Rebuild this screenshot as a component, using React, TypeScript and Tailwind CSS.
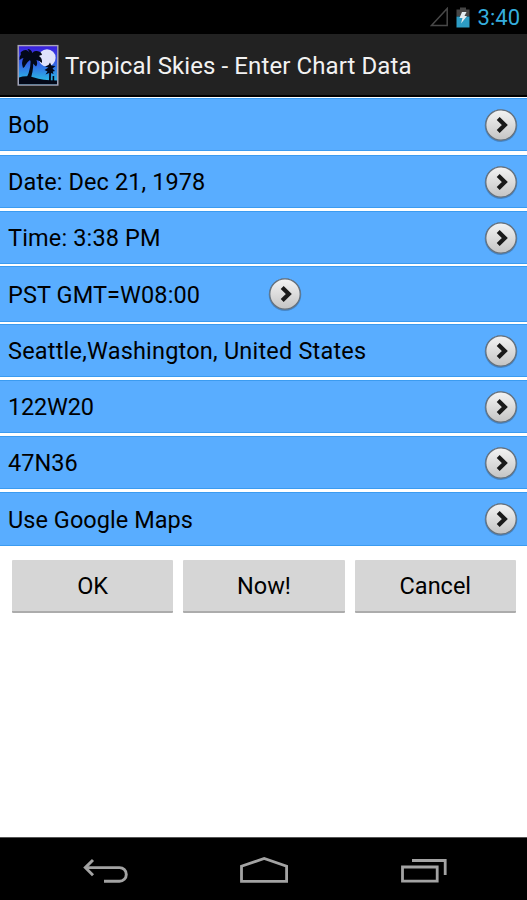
import { clsx } from "clsx";

type ChartField = {
  text: string;
  // Row height, gap above it and text spacing
  box: string;
  spacing: string;
  narrow?: boolean;
};

const FIELDS: ChartField[] = [
  { text: "Bob", box: "mt-px h-[53px]", spacing: "tracking-[0px]" },
  { text: "Date: Dec 21, 1978", box: "mt-1 h-[53px]", spacing: "tracking-[0.1px]" },
  { text: "Time: 3:38 PM", box: "mt-[3px] h-[53px]", spacing: "tracking-[0.15px]" },
  { text: "PST GMT=W08:00", box: "mt-0.5 h-14", spacing: "tracking-[0.1px]", narrow: true },
  { text: "Seattle,Washington, United States", box: "mt-0.5 h-[53px]", spacing: "tracking-[0.2px]" },
  { text: "122W20", box: "mt-[3px] h-[53px]", spacing: "tracking-[-0.2px]" },
  { text: "47N36", box: "mt-[3px] h-[53px]", spacing: "tracking-[0px]" },
  { text: "Use Google Maps", box: "mt-[3px] h-[54px]", spacing: "tracking-[0.05px]" },
];

const BUTTONS = ["OK", "Now!", "Cancel"];

function ArrowBadge() {
  return (
    <svg className="size-9 shrink-0" viewBox="0 0 36 36" fill="none">
      <defs>
        <linearGradient id="badge" x1="0" y1="0" x2="0" y2="1">
          <stop offset="0" stopColor="#f4f4f4" />
          <stop offset="1" stopColor="#c4c4c4" />
        </linearGradient>
      </defs>
      <circle cx="18" cy="18.6" r="16.3" fill="#2f5f92" opacity="0.5" />
      <circle cx="18" cy="18" r="15.2" fill="url(#badge)" stroke="#66717c" strokeWidth="1.2" />
      <path d="M15.2 11.6 L21.8 18 L15.2 24.4" stroke="#1a1a1a" strokeWidth="4.2" />
    </svg>
  );
}

function AppIcon() {
  return (
    <svg className="size-[42px]" viewBox="0 0 42 42">
      <defs>
        <linearGradient id="sky" x1="0" y1="0" x2="0" y2="1">
          <stop offset="0" stopColor="#3a1cdc" />
          <stop offset="0.4" stopColor="#3458e6" />
          <stop offset="0.85" stopColor="#2cb0e4" />
        </linearGradient>
      </defs>
      <rect x="1.2" y="1.6" width="39.6" height="39.4" fill="url(#sky)" stroke="#aaa5b8" strokeWidth="1.4" />
      <circle cx="30" cy="13.8" r="8.6" fill="#dfe2fb" />
      <g fill="#030818">
        <path d="M2 33.5 Q9 31 17 33.5 Q25 36.5 40 36.5 V40.3 H2 Z" />
        <path d="M13 12 Q15 23 9.5 34 H14 Q17.5 22 15.5 12 Z" />
        <path d="M14 11 Q10 3 4 8 Q3 9 4 10 Q2.5 12 2.5 16 Q5 14 6.5 14 Q4 18 6 24 Q8 23 8.5 21 Q10 18 13 16 Q15 19 19 22.5 Q21 20 19.5 16 Q22 16.5 25 19 Q25.5 14 22 12 Q23.5 11 25 11 Q24.5 7.5 20 7 Q16.5 6.5 15.5 9 Q14 5 10.5 5 Z" />
        <path d="M31.5 23.5 L28 22.5 L31.5 21 L33 18.5 L34.3 21.5 L38.5 22 L35.5 24.5 L38 27 L35.8 27.5 L36.5 30 L34 29 L33.8 37 H32 L32.2 29 L28.5 30.5 L30.5 27.5 L27.5 26 Z" />
        <path d="M35.6 32 h1.6 v5 h-1.6 Z" />
      </g>
    </svg>
  );
}

function StatusBar() {
  return (
    <div className="flex h-[34px] items-center justify-end bg-black pr-[7px]">
      <svg className="mr-[7px] h-5 w-[19px]" viewBox="0 0 19 20" fill="none">
        <path d="M1.5 18.4 H17.2 V1.5 Z" stroke="#484848" strokeWidth="1.5" />
      </svg>
      <svg className="mr-2 h-[21px] w-[14px]" viewBox="0 0 14 21">
        <path d="M4 0.5 h6 v2 h3.5 v7 h-13 v-7 h3.5 Z" fill="#464646" />
        <path d="M0.5 9.5 h13 v11 h-13 Z" fill="#2d9cc4" />
        <path d="M6 5 h4.5 l-2 4 h2.5 l-6 7.5 l1.5 -5.5 h-3 Z" fill="#e4edf1" />
      </svg>
      <span className="pt-0.5 text-[22px] leading-8 text-[#35aede]">3:40</span>
    </div>
  );
}

function NavBar() {
  return (
    <div className="flex h-[63px] items-center border-t border-[#555] bg-black pt-1">
      <svg className="ml-[82px] h-[30px] w-[46px]" viewBox="0 0 46 30" fill="none" stroke="#a3a3a3" strokeWidth="2.9">
        <path d="M11 4 L3.3 11.6 L11 19.2" />
        <path d="M3 11.6 H37.5 A6.8 6.8 0 0 1 37.5 25.2 H22" />
      </svg>
      <svg className="ml-[110px] h-[30px] w-[50px]" viewBox="0 0 50 30" fill="none" stroke="#a3a3a3" strokeWidth="2.8">
        <path d="M3.5 25.3 V10.3 L26.2 2.5 L48.6 10.3 V25.3 Z" />
      </svg>
      <svg className="ml-[111px] h-[30px] w-[48px]" viewBox="0 0 48 30" fill="none" stroke="#a3a3a3" strokeWidth="2.8">
        <path d="M3.5 11 H38.2 V25.2 H3.5 Z" />
        <path d="M13 4.5 H46.2 V19" />
      </svg>
    </div>
  );
}

export default function App() {
  return (
    <div className="flex h-[900px] w-[527px] flex-col overflow-hidden bg-white font-[Roboto,sans-serif] text-[23.5px] text-black">
      <StatusBar />

      {/* Title bar */}
      <div className="flex h-[63px] items-center border-b-2 border-black bg-[#222] pl-[17px]">
        <AppIcon />
        <h1 className="ml-1.5 pt-0.5 text-[24px] tracking-[0.1px] whitespace-nowrap text-[#f2f2f2]">
          Tropical Skies - Enter Chart Data
        </h1>
      </div>

      {/* Chart fields */}
      <div className="flex flex-col">
        {FIELDS.map(({ text, box, spacing, narrow }) => (
          <div
            key={text}
            className={clsx(
              "flex items-center border-y border-[#3b9bf0] bg-[#59adff] pl-2",
              box,
            )}
          >
            <span
              className={clsx("pt-[3px] whitespace-nowrap", spacing, narrow ? "w-[259px]" : "w-[475px]")}
            >
              {text}
            </span>
            <ArrowBadge />
          </div>
        ))}
      </div>

      {/* Actions */}
      <div className="mt-[14px] flex gap-[10px] pr-[11px] pl-3">
        {BUTTONS.map((label) => (
          <button
            key={label}
            className="h-[53px] flex-1 rounded-[1px] border-b-2 border-[#acacac] bg-[#d6d6d6] pt-[3px]"
          >
            {label}
          </button>
        ))}
      </div>

      <div className="flex-1" />
      <NavBar />
    </div>
  );
}
